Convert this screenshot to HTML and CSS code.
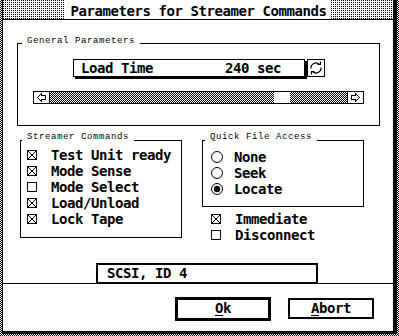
FILE: index.html
```html
<!DOCTYPE html>
<html>
<head>
<meta charset="utf-8">
<title>Parameters for Streamer Commands</title>
<link rel="stylesheet" href="styles.css">
</head>
<body>
<div class="window">
  <div class="titlebar"><span class="title">Parameters for Streamer Commands</span></div>
  <div class="content">
    <div class="group general">
      <span class="legend">General Parameters</span>
      <div class="field-row">
        <div class="field">Load Time         240 sec</div>
        <div class="cycle">
          <svg width="16" height="16" viewBox="0 0 16 16">
            <path d="M3 8.5A5 5 0 0 1 11.5 4.5" fill="none" stroke="#000" stroke-width="1.2"/>
            <path d="M9.5 4.5H12.5V1.5" fill="none" stroke="#000" stroke-width="1.2"/>
            <path d="M13 7.5A5 5 0 0 1 4.5 11.5" fill="none" stroke="#000" stroke-width="1.2"/>
            <path d="M6.5 11.5H3.5V14.5" fill="none" stroke="#000" stroke-width="1.2"/>
          </svg>
        </div>
      </div>
      <div class="slider">
        <div class="arrow arrow-left">
          <svg width="9" height="9" viewBox="0 0 9 9"><path d="M0.5 4.5L4.5 0.5V2.5H8.5V6.5H4.5V8.5Z" fill="#fff" stroke="#000" shape-rendering="crispEdges"/></svg>
        </div>
        <div class="track"><div class="thumb"></div></div>
        <div class="arrow arrow-right">
          <svg width="9" height="9" viewBox="0 0 9 9"><path d="M8.5 4.5L4.5 0.5V2.5H0.5V6.5H4.5V8.5Z" fill="#fff" stroke="#000" shape-rendering="crispEdges"/></svg>
        </div>
      </div>
    </div>

    <div class="row2">
      <div class="group streamer">
        <span class="legend">Streamer Commands</span>
        <ul class="opts">
          <li><svg class="box" width="10" height="10" viewBox="0 0 10 10"><rect x="0.5" y="0.5" width="9" height="9" fill="#fff" stroke="#000"/><path d="M1 1L9 9M9 1L1 9" stroke="#000"/></svg>Test Unit ready</li>
          <li><svg class="box" width="10" height="10" viewBox="0 0 10 10"><rect x="0.5" y="0.5" width="9" height="9" fill="#fff" stroke="#000"/><path d="M1 1L9 9M9 1L1 9" stroke="#000"/></svg>Mode Sense</li>
          <li><svg class="box" width="10" height="10" viewBox="0 0 10 10"><rect x="0.5" y="0.5" width="9" height="9" fill="#fff" stroke="#000"/></svg>Mode Select</li>
          <li><svg class="box" width="10" height="10" viewBox="0 0 10 10"><rect x="0.5" y="0.5" width="9" height="9" fill="#fff" stroke="#000"/><path d="M1 1L9 9M9 1L1 9" stroke="#000"/></svg>Load/Unload</li>
          <li><svg class="box" width="10" height="10" viewBox="0 0 10 10"><rect x="0.5" y="0.5" width="9" height="9" fill="#fff" stroke="#000"/><path d="M1 1L9 9M9 1L1 9" stroke="#000"/></svg>Lock Tape</li>
        </ul>
      </div>
      <div class="col">
        <div class="group quick">
          <span class="legend">Quick File Access</span>
          <ul class="opts radios">
            <li><svg class="radio" width="12" height="12" viewBox="0 0 12 12"><circle cx="6" cy="6" r="5.5" fill="#fff" stroke="#000"/></svg>None</li>
            <li><svg class="radio" width="12" height="12" viewBox="0 0 12 12"><circle cx="6" cy="6" r="5.5" fill="#fff" stroke="#000"/></svg>Seek</li>
            <li><svg class="radio" width="12" height="12" viewBox="0 0 12 12"><circle cx="6" cy="6" r="5.5" fill="#fff" stroke="#000"/><circle cx="6" cy="6" r="3.2" fill="#000"/></svg>Locate</li>
          </ul>
        </div>
        <ul class="opts extra">
          <li><svg class="box" width="10" height="10" viewBox="0 0 10 10"><rect x="0.5" y="0.5" width="9" height="9" fill="#fff" stroke="#000"/><path d="M1 1L9 9M9 1L1 9" stroke="#000"/></svg>Immediate</li>
          <li><svg class="box" width="10" height="10" viewBox="0 0 10 10"><rect x="0.5" y="0.5" width="9" height="9" fill="#fff" stroke="#000"/></svg>Disconnect</li>
        </ul>
      </div>
    </div>

    <div class="scsi">SCSI, ID 4</div>
  </div>
  <div class="buttons">
    <div class="btn btn-default"><u>O</u>k</div>
    <div class="btn"><u>A</u>bort</div>
  </div>
</div>
</body>
</html>
```

FILE: styles.css
```css
* {
  box-sizing: border-box;
  margin: 0;
  padding: 0;
}

html, body {
  width: 399px;
  height: 336px;
  overflow: hidden;
}

body {
  background: repeating-conic-gradient(#000 0 25%, #fff 0 50%) 0 0 / 2px 2px;
  font-family: "DejaVu Sans Mono", "Liberation Mono", monospace;
  font-weight: bold;
  font-size: 14px;
  letter-spacing: -0.43px;
  line-height: 16px;
  color: #000;
}

.window {
  margin-left: 2px;
  width: 395px;
  background: #fff;
  border-left: 1px solid #000;
  border-right: 4px solid #000;
  border-bottom: 3px solid #000;
}

/* title bar */
.titlebar {
  height: 20px;
  border-bottom: 1px solid #000;
  display: flex;
  justify-content: center;
  background: conic-gradient(from 90deg at 1px 1px, #fff 0 50%, #000 0 75%, #fff 0) 0 0 / 2px 2px;
}

.title {
  background: #fff;
  height: 19px;
  padding: 3px 5px 0 6px;
  white-space: pre;
}

/* content */
.content {
  height: 263px;
  padding-top: 23px;
}

.group {
  position: relative;
  border: 1px solid #000;
}

.legend {
  position: absolute;
  background: #fff;
  padding: 0 5px;
  font-family: "Liberation Mono", monospace;
  font-weight: normal;
  font-size: 9px;
  letter-spacing: 0.6px;
  line-height: 9px;
  white-space: pre;
}

.general {
  margin: 0 13px 0 14px;
  height: 83px;
}

.general .legend {
  top: -7px;
  left: 4px;
}

.field-row {
  display: flex;
  margin: 15px 0 0 55px;
}

.field {
  width: 232px;
  height: 18px;
  border: 1px solid #000;
  box-shadow: 2px 2px 0 #000;
  padding: 0 0 0 7px;
  white-space: pre;
}

.cycle {
  width: 18px;
  height: 18px;
  margin-left: 2px;
  border: 1px solid #000;
  display: flex;
  align-items: center;
  justify-content: center;
}

.cycle svg {
  display: block;
}

.slider {
  display: flex;
  margin: 14px 0 0 15px;
  width: 331px;
  height: 13px;
  border: 1px solid #000;
}

.arrow {
  width: 16px;
  display: flex;
  align-items: center;
  justify-content: center;
  background: #fff;
}

.arrow svg {
  display: block;
}

.arrow-left {
  border-right: 1px solid #000;
}

.arrow-right {
  border-left: 1px solid #000;
}

.track {
  flex: 1;
  display: flex;
  background: repeating-conic-gradient(#000 0 25%, #fff 0 50%) 0 0 / 2px 2px;
}

.thumb {
  width: 16px;
  margin-left: 224px;
  background: #fff;
}

/* second row */
.row2 {
  display: flex;
  margin-top: 14px;
}

.streamer {
  margin-left: 17px;
  width: 162px;
  height: 98px;
  padding: 6px 0 0 6px;
}

.streamer .legend {
  top: -8px;
  left: 1px;
}

.col {
  margin-left: 20px;
  width: 162px;
}

.quick {
  height: 67px;
  padding: 8px 0 0 8px;
}

.quick .legend {
  top: -8px;
  left: 2px;
}

.opts {
  list-style: none;
}

.opts li {
  display: flex;
  align-items: flex-start;
  height: 16px;
  white-space: pre;
}

.box {
  display: block;
  width: 10px;
  height: 10px;
  margin: 3px 14px 0 0;
  flex: none;
}

.radio {
  display: block;
  width: 12px;
  height: 12px;
  margin: 2px 11px 0 0;
  flex: none;
}

.extra {
  margin-top: 4px;
  padding-left: 9px;
}

.extra .box {
  margin: 3px 14px 0 0;
}

.scsi {
  margin: 20px 0 0 93px;
  width: 222px;
  height: 21px;
  border: 2px solid #000;
  padding-left: 9px;
  white-space: pre;
}

/* buttons */
.buttons {
  height: 48px;
  border-top: 1px solid #000;
  display: flex;
  justify-content: flex-end;
  align-items: flex-start;
  padding-right: 19px;
}

.btn {
  width: 86px;
  height: 21px;
  margin-top: 14px;
  margin-left: 17px;
  border: 2px solid #000;
  text-align: center;
}

.btn-default {
  width: 96px;
  height: 24px;
  margin-top: 13px;
  border-width: 3px;
}

.btn u {
  text-decoration: underline;
  text-decoration-thickness: 1px;
  text-underline-offset: 2px;
}
```
